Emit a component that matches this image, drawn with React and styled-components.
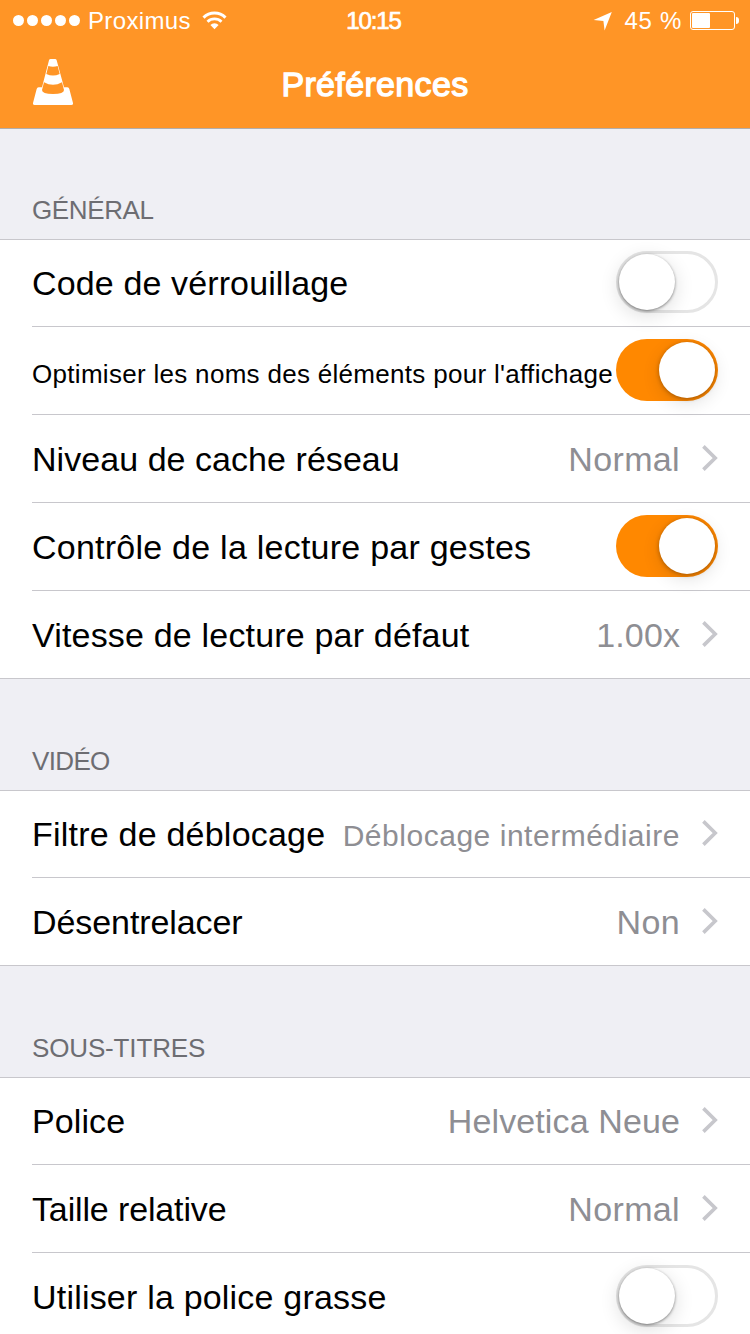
import React from "react";
import styled, { createGlobalStyle } from "styled-components";

const sections = [
  {
    title: "GÉNÉRAL",
    tracking: -0.38,
    rows: [
      {
        label: "Code de vérrouillage",
        tracking: 0.13,
        type: "switch",
        on: false,
      },
      {
        label: "Optimiser les noms des éléments pour l'affichage",
        tracking: 0.3,
        type: "switch",
        on: true,
        small: true,
      },
      { label: "Niveau de cache réseau", tracking: 0.05, value: "Normal" },
      {
        label: "Contrôle de la lecture par gestes",
        tracking: 0.24,
        type: "switch",
        on: true,
      },
      {
        label: "Vitesse de lecture par défaut",
        tracking: 0.18,
        value: "1.00x",
        valueTracking: 0.1,
      },
    ],
  },
  {
    title: "VIDÉO",
    tracking: -0.65,
    rows: [
      {
        label: "Filtre de déblocage",
        tracking: 0.22,
        value: "Déblocage intermédiaire",
        valueTracking: 0.53,
        smallValue: true,
      },
      { label: "Désentrelacer", tracking: -0.08, value: "Non" },
    ],
  },
  {
    title: "SOUS-TITRES",
    tracking: -0.15,
    rows: [
      {
        label: "Police",
        tracking: 0.1,
        value: "Helvetica Neue",
        valueTracking: 0.12,
      },
      { label: "Taille relative", tracking: -0.14, value: "Normal" },
      {
        label: "Utiliser la police grasse",
        tracking: 0.2,
        type: "switch",
        on: false,
      },
    ],
  },
];

const WifiIcon = () => (
  <svg width="25" height="19" viewBox="0 0 25 19" fill="none">
    <path d="M1.5 6.6a15.6 15.6 0 0 1 22 0" stroke="#fff" strokeWidth="3" />
    <path d="M5.5 10.7a9.9 9.9 0 0 1 14 0" stroke="#fff" strokeWidth="2.8" />
    <path d="M12.5 18.2 8.4 14a5.8 5.8 0 0 1 8.2 0z" fill="#fff" />
  </svg>
);

const LocationIcon = () => (
  <svg width="19" height="19" viewBox="0 0 19 19">
    <path d="M18.8 0 11.6 18.6 10.4 9 0.6 8z" fill="#fff" />
  </svg>
);

const ConeIcon = () => (
  <svg width="40" height="46" viewBox="0 0 120 138">
    <path
      d="M53 0h13q4 0 5 4l22 81h10q5 0 6 5l11 42q1 6-5 6H5q-6 0-5-6l11-42q1-5 6-5h10L48 4q1-4 5-4z"
      fill="#fff"
    />
    <path d="M46 21q14 5 28 0l6 24q-20 9-40 0z" fill="#ff9526" />
    <path d="M33 70q27 15 54 0l6 23q0 12-33 12T27 93z" fill="#ff9526" />
  </svg>
);

const Chevron = () => (
  <ChevronSvg width="16" height="26" viewBox="0 0 16 26" fill="none">
    <path d="M1.4 1.4 13.2 13 1.4 24.6" stroke="#c7c7cc" strokeWidth="3.6" />
  </ChevronSvg>
);

const SettingsRow = ({ row }) => (
  <Row>
    <Label $small={row.small} $tracking={row.tracking}>
      {row.label}
    </Label>
    {row.type === "switch" ? (
      <Switch role="switch" aria-checked={row.on} $on={row.on}>
        <Knob $on={row.on} />
      </Switch>
    ) : (
      <>
        <Value $small={row.smallValue} $tracking={row.valueTracking ?? 0.35}>
          {row.value}
        </Value>
        <Chevron />
      </>
    )}
  </Row>
);

const App = () => (
  <Screen>
    <GlobalStyle />
    <Header>
      <StatusBar>
        <StatusLeft>
          <Signal>
            {[0, 1, 2, 3, 4].map((dot) => (
              <Dot key={dot} />
            ))}
          </Signal>
          <Carrier>Proximus</Carrier>
          <WifiIcon />
        </StatusLeft>
        <Clock>10:15</Clock>
        <StatusRight>
          <LocationIcon />
          <Percent>45 %</Percent>
          <Battery>
            <BatteryBody>
              <BatteryLevel />
            </BatteryBody>
            <BatteryTip />
          </Battery>
        </StatusRight>
      </StatusBar>
      <NavBar>
        <ConeIcon />
        <Title>Préférences</Title>
      </NavBar>
    </Header>
    {sections.map((section) => (
      <section key={section.title}>
        <SectionTitle $tracking={section.tracking}>
          {section.title}
        </SectionTitle>
        <List>
          {section.rows.map((row) => (
            <SettingsRow key={row.label} row={row} />
          ))}
        </List>
      </section>
    ))}
  </Screen>
);

export default App;

const GlobalStyle = createGlobalStyle`
  * {
    box-sizing: border-box;
  }

  body {
    margin: 0;
    background: #efeff4;
    overflow: hidden;
  }
`;

const Screen = styled.div`
  width: 750px;
  height: 1334px;
  overflow: hidden;
  background: #efeff4;
  color: #000;
  font-family: "Liberation Sans", Arial, sans-serif;

  svg {
    display: block;
    flex-shrink: 0;
  }
`;

const Header = styled.header`
  height: 129px;
  background: #ff9526;
  border-bottom: 1px solid #b2adab;
  color: #fff;
`;

const StatusBar = styled.div`
  display: grid;
  grid-template-columns: 1fr auto 1fr;
  align-items: center;
  height: 40px;
  padding: 1px 11px 0 13px;
  font-size: 24px;
  line-height: 39px;
`;

const StatusLeft = styled.div`
  display: flex;
  align-items: center;
`;

const Signal = styled.div`
  display: flex;
  gap: 3px;
  margin-right: 8px;
`;

const Dot = styled.i`
  width: 11px;
  height: 11px;
  border-radius: 50%;
  background: #fff;
`;

const Carrier = styled.span`
  width: 114px;
  letter-spacing: 0.35px;
`;

/* regular weight with a thin stroke gives the medium weight of the bar */
const Clock = styled.span`
  margin-right: 5px;
  letter-spacing: -1.1px;
  -webkit-text-stroke: 0.7px #fff;
`;

const StatusRight = styled.div`
  display: flex;
  align-items: center;
  justify-content: flex-end;

  & > svg {
    margin-top: 1px;
  }
`;

const Percent = styled.span`
  margin: 0 8px 0 12px;
  letter-spacing: 0.7px;
`;

const Battery = styled.div`
  display: flex;
  align-items: center;
  gap: 1px;
`;

const BatteryBody = styled.div`
  width: 45px;
  height: 19px;
  padding: 1px;
  border: 1px solid #fff;
  border-radius: 3px;
`;

const BatteryLevel = styled.div`
  width: 18px;
  height: 15px;
  background: #fff;
  border-radius: 1px;
`;

const BatteryTip = styled.div`
  width: 3px;
  height: 7px;
  background: #fff;
  border-radius: 0 3px 3px 0;
`;

const NavBar = styled.div`
  display: grid;
  grid-template-columns: 1fr auto 1fr;
  align-items: center;
  height: 88px;
  padding: 0 33px;

  svg {
    margin-top: -4px;
  }
`;

const Title = styled.h1`
  margin: 0;
  font-size: 34px;
  font-weight: normal;
  letter-spacing: 0.35px;
  -webkit-text-stroke: 1.3px #fff;
`;

const SectionTitle = styled.h2`
  height: 111px;
  margin: 0;
  padding: 67px 32px 0;
  color: #6d6d72;
  font-size: 26px;
  font-weight: normal;
  letter-spacing: ${({ $tracking }) => $tracking}px;
  line-height: 30px;

  section:first-of-type & {
    height: 110px;
    padding-top: 66px;
  }
`;

const List = styled.div`
  background: #fff;
  border-top: 1px solid #c8c7cc;
`;

const Row = styled.div`
  display: flex;
  align-items: center;
  height: 88px;
  margin-left: 32px;
  padding-right: 32px;
  border-bottom: 1px solid #c8c7cc;

  &:first-child {
    margin-top: -1px;
  }

  &:last-child {
    margin-left: 0;
    padding-left: 32px;
  }
`;

const Label = styled.span`
  flex: 1;
  padding-top: ${({ $small }) => ($small ? "7px" : "1px")};
  font-size: ${({ $small }) => ($small ? "26px" : "34px")};
  letter-spacing: ${({ $tracking }) => $tracking}px;
  white-space: nowrap;
`;

const Value = styled.span`
  padding-top: ${({ $small }) => ($small ? "4px" : "1px")};
  color: #8e8e93;
  font-size: ${({ $small }) => ($small ? "30px" : "34px")};
  letter-spacing: ${({ $tracking }) => $tracking}px;
  white-space: nowrap;
`;

const ChevronSvg = styled.svg`
  margin: -1px 0 0 22px;
`;

const Switch = styled.div`
  align-self: flex-start;
  flex-shrink: 0;
  width: 102px;
  height: 62px;
  margin-top: 12px;
  padding: ${({ $on }) => ($on ? "3px 3px 3px 43px" : "0")};
  border: ${({ $on }) => ($on ? "none" : "3px solid #e5e5e5")};
  border-radius: 31px;
  background: ${({ $on }) => ($on ? "#ff8800" : "#fff")};
`;

const Knob = styled.div`
  width: 56px;
  height: 56px;
  border-radius: 50%;
  background: #fff;
  box-shadow: ${({ $on }) =>
    $on
      ? "0 1px 4px rgba(0, 0, 0, 0.3), 0 5px 18px rgba(0, 0, 0, 0.12)"
      : "0 1px 3px rgba(0, 0, 0, 0.45), 0 5px 20px rgba(0, 0, 0, 0.14)"};
`;
